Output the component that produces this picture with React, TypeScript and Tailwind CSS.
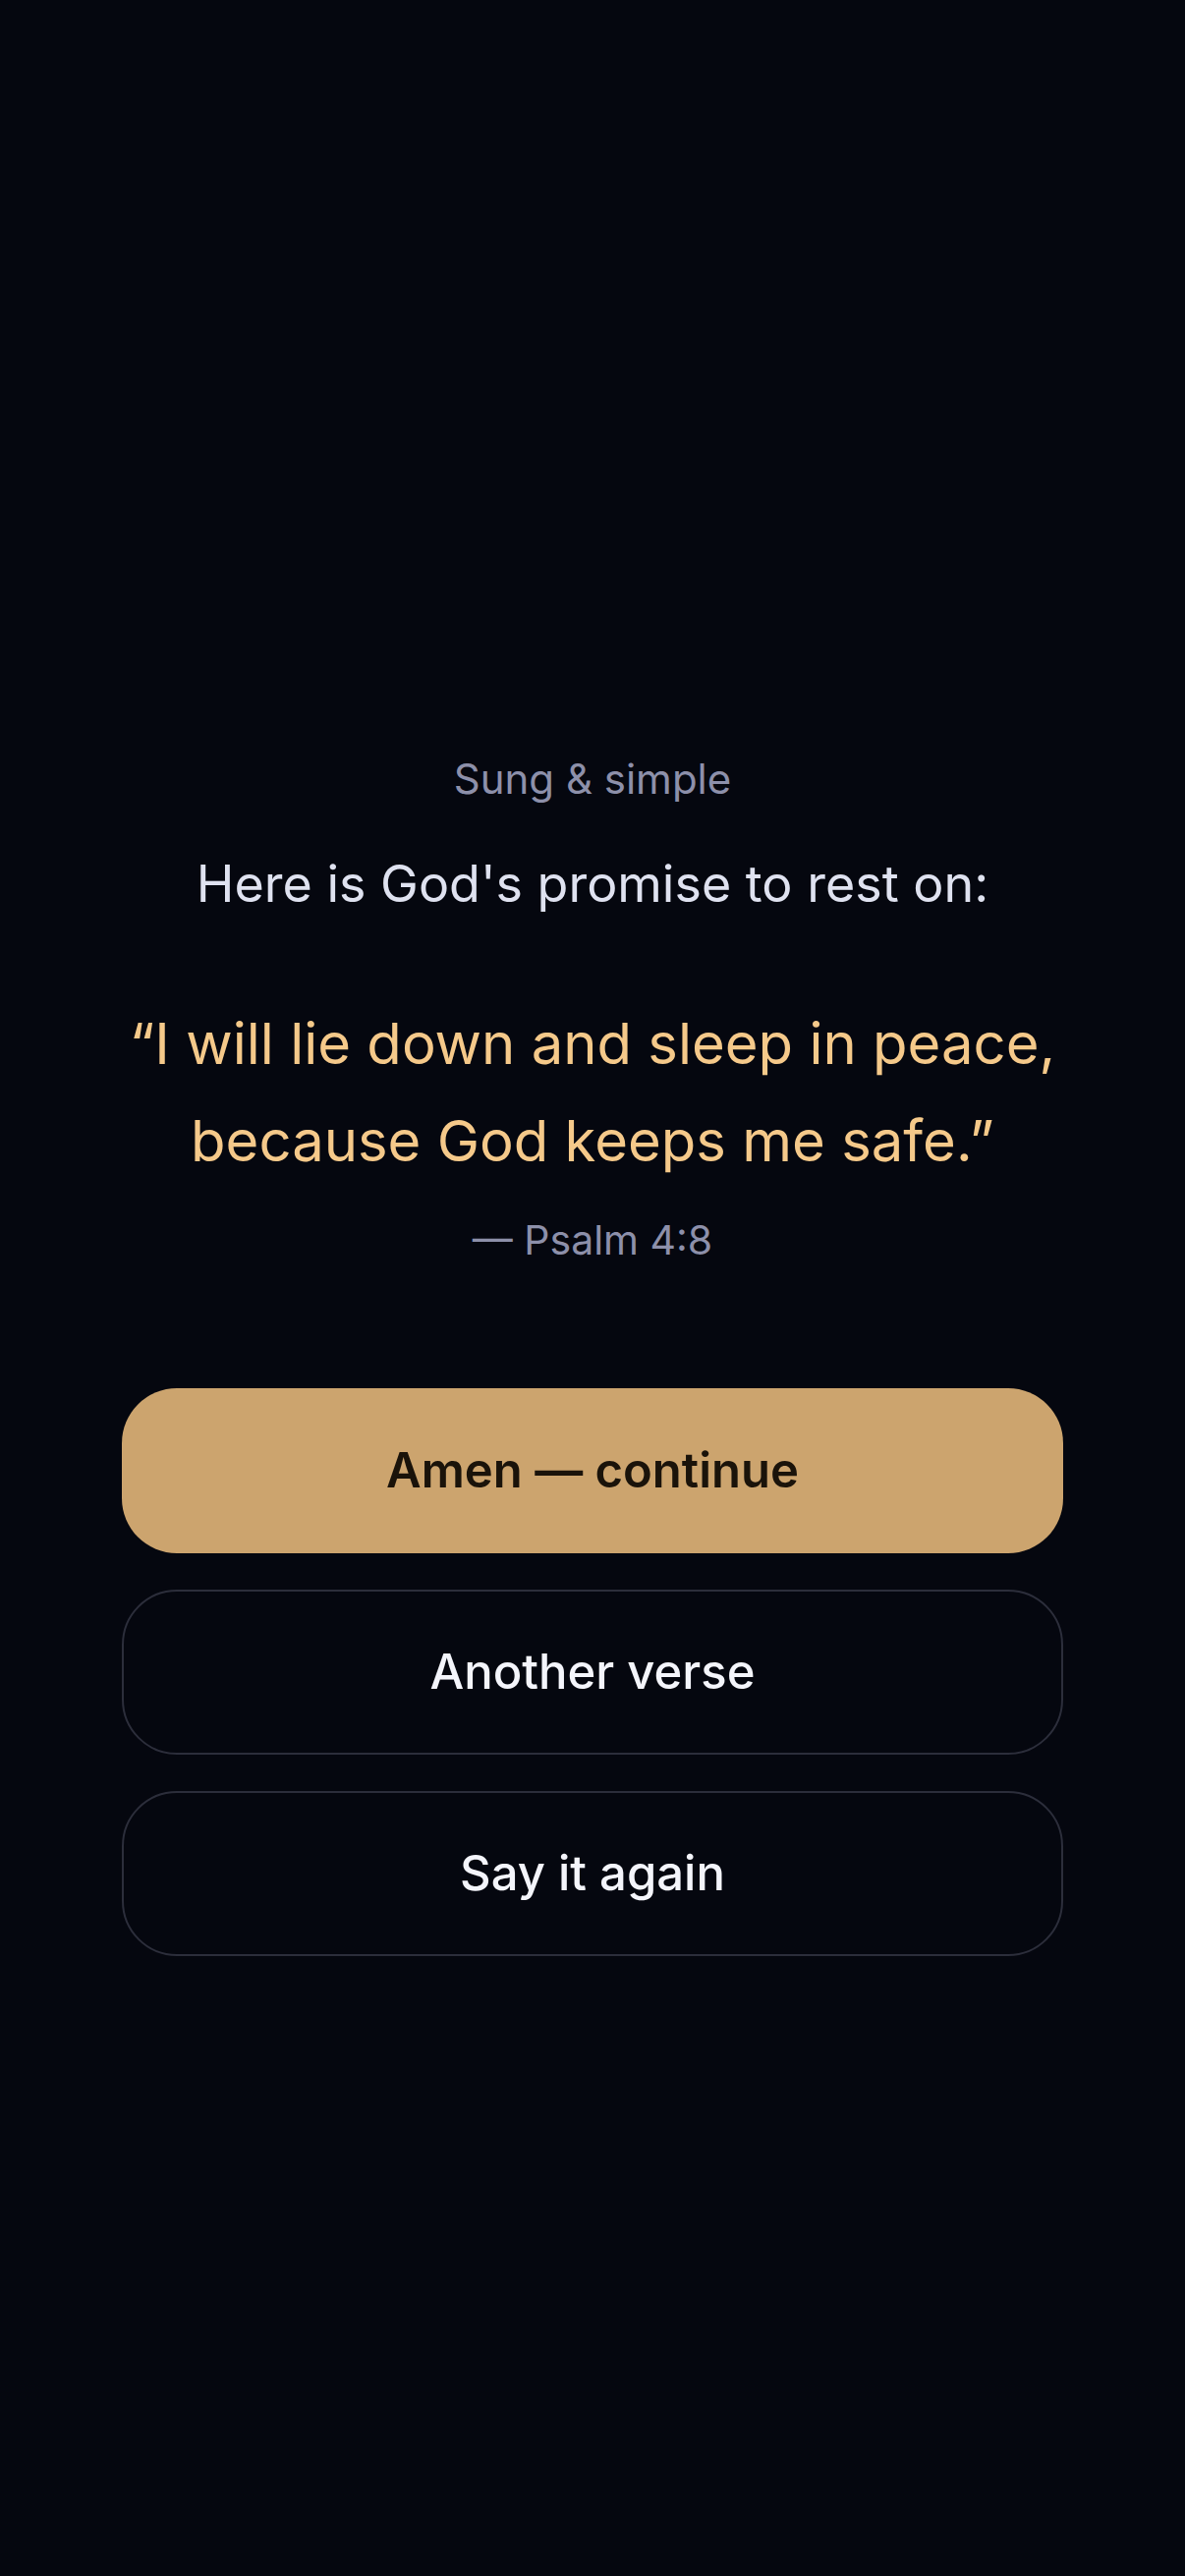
import React from "react";

const verse = {
  label: "Sung & simple",
  intro: "Here is God's promise to rest on:",
  text: "\u201CI will lie down and sleep in peace, because God keeps me safe.\u201D",
  ref: "\u2014 Psalm 4:8",
};

export default function App() {
  return (
    <div
      className="min-h-[2622px] w-full bg-[#05070f] px-[124px] pt-[761px]"
      style={{ fontFamily: "Inter, 'Noto Sans', 'Liberation Sans', sans-serif" }}
    >
      <div className="flex flex-col items-center text-center">
        <p className="text-[42px] leading-[63px] text-[#8d90aa]">{verse.label}</p>
        <h1 className="mt-[39px] text-[52px] leading-[73px] text-[#dfe2f0]">{verse.intro}</h1>
        <p className="mt-[77px] max-w-[980px] text-[58px] leading-[99px] text-[#f5c98a]">{verse.text}</p>
        <p className="mt-[20px] text-[41px] leading-[63px] text-[#8d90aa]">{verse.ref}</p>
      </div>

      <div className="mt-[119px] flex flex-col gap-[37px]">
        <button className="h-[168px] w-full rounded-[56px] bg-[#cca46e] text-[49px] font-semibold text-[#1a130a]">
          Amen — continue
        </button>
        <button className="h-[168px] w-full rounded-[56px] border-2 border-[#2c2e3b] text-[49px] font-medium text-[#f4f5fb]">
          Another verse
        </button>
        <button className="h-[168px] w-full rounded-[56px] border-2 border-[#2c2e3b] text-[49px] font-medium text-[#f4f5fb]">
          Say it again
        </button>
      </div>
    </div>
  );
}
